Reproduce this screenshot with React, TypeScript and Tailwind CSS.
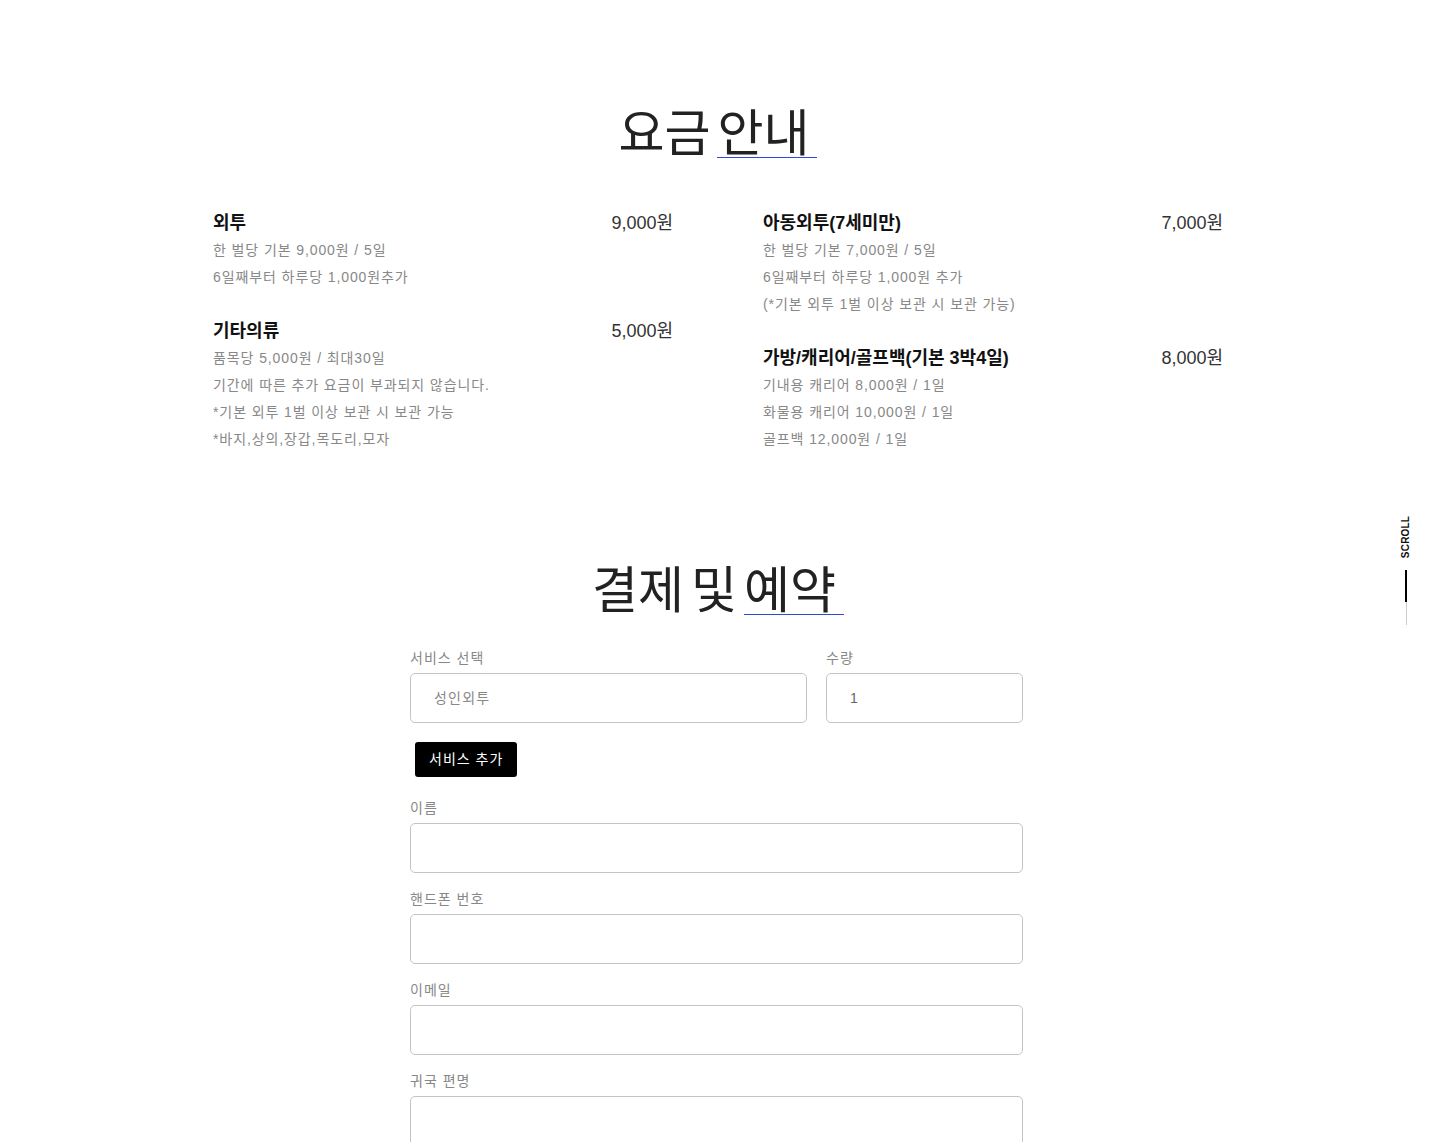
import React from "react";

const FONT = '"Liberation Sans", "Noto Sans CJK KR", sans-serif';

type Item = { title: string; price: string; lines: string[] };

const left: Item[] = [
  { title: "외투", price: "9,000원", lines: ["한 벌당 기본 9,000원 / 5일", "6일째부터 하루당 1,000원추가"] },
  {
    title: "기타의류",
    price: "5,000원",
    lines: [
      "품목당 5,000원 / 최대30일",
      "기간에 따른 추가 요금이 부과되지 않습니다.",
      "*기본 외투 1벌 이상 보관 시 보관 가능",
      "*바지,상의,장갑,목도리,모자",
    ],
  },
];

const right: Item[] = [
  {
    title: "아동외투(7세미만)",
    price: "7,000원",
    lines: ["한 벌당 기본 7,000원 / 5일", "6일째부터 하루당 1,000원 추가", "(*기본 외투 1벌 이상 보관 시 보관 가능)"],
  },
  {
    title: "가방/캐리어/골프백(기본 3박4일)",
    price: "8,000원",
    lines: ["기내용 캐리어 8,000원 / 1일", "화물용 캐리어 10,000원 / 1일", "골프백 12,000원 / 1일"],
  },
];

function PriceItem({ item }: { item: Item }) {
  return (
    <div>
      <div className="flex items-center justify-between leading-[28px] text-[18px]">
        <span className="font-bold text-[#111]">{item.title}</span>
        <span className="text-[#333]">{item.price}</span>
      </div>
      {item.lines.map((l) => (
        <div key={l} className="text-[14px] leading-[27px] tracking-[0.9px] text-[#888]">
          {l}
        </div>
      ))}
    </div>
  );
}

function Title({ a, b }: { a: string; b: string }) {
  return (
    <h2 className="text-center text-[50px] leading-[48px] font-normal text-[#222] [word-spacing:-7px]">
      <span>{a} </span>
      <span className="relative inline-block w-[100px] text-left">
        {b}
        <span className="absolute left-0 bottom-[0px] h-[1.5px] w-[100px] bg-[#2b4bd8]" />
      </span>
    </h2>
  );
}

function Label({ children }: { children: React.ReactNode }) {
  return <div className="mb-[5px] text-[14px] leading-[20px] tracking-[1px] text-[#888]">{children}</div>;
}

function Field({ label }: { label: string }) {
  return (
    <div className="mb-[16px]">
      <Label>{label}</Label>
      <div className="h-[50px] rounded-[5px] border border-[#c4c4c4] bg-white" />
    </div>
  );
}

export default function App() {
  return (
    <div className="relative min-h-[1142px] bg-white" style={{ fontFamily: FONT }}>
      <div className="pt-[110px]">
        <Title a="요금" b="안내" />
      </div>

      <div className="mx-auto mt-[51px] grid w-[1010px] grid-cols-2 gap-x-[90px]">
        <div className="flex flex-col gap-[26px]">
          {left.map((i) => (
            <PriceItem key={i.title} item={i} />
          ))}
        </div>
        <div className="flex flex-col gap-[26px]">
          {right.map((i) => (
            <PriceItem key={i.title} item={i} />
          ))}
        </div>
      </div>

      <div className="mt-[114px]">
        <Title a="결제 및" b="예약" />
      </div>

      <div className="ml-[calc(50%-308px)] mt-[33px] w-[613px] pb-[80px]">
        <div className="grid grid-cols-[1fr_197px] gap-x-[19px]">
          <div>
            <Label>서비스 선택</Label>
            <div className="flex h-[50px] items-center rounded-[5px] border border-[#c4c4c4] pl-[23px] text-[14px] tracking-[1.2px] text-[#888]">
              성인외투
            </div>
          </div>
          <div>
            <Label>수량</Label>
            <div className="flex h-[50px] items-center rounded-[5px] border border-[#c4c4c4] pl-[23px] text-[14px] text-[#666]">
              1
            </div>
          </div>
        </div>

        <button className="ml-[5px] mt-[19px] mb-[21px] h-[35px] rounded-[3px] bg-black px-[14px] text-[14px] tracking-[1px] text-white">
          서비스 추가
        </button>

        <Field label="이름" />
        <Field label="핸드폰 번호" />
        <Field label="이메일" />
        <Field label="귀국 편명" />
      </div>

      <div className="absolute left-[1400px] top-[514px] flex w-[12px] flex-col items-center">
        <div className="flex h-[46px] w-[12px] items-center justify-center">
          <span className="-rotate-90 whitespace-nowrap text-[10px] font-bold leading-none tracking-[0.2px] text-[#111]">
            SCROLL
          </span>
        </div>
        <div className="mt-[10px] h-[32px] w-[2px] bg-black" />
        <div className="h-[23px] w-[1px] bg-[#ccc]" />
      </div>
    </div>
  );
}
